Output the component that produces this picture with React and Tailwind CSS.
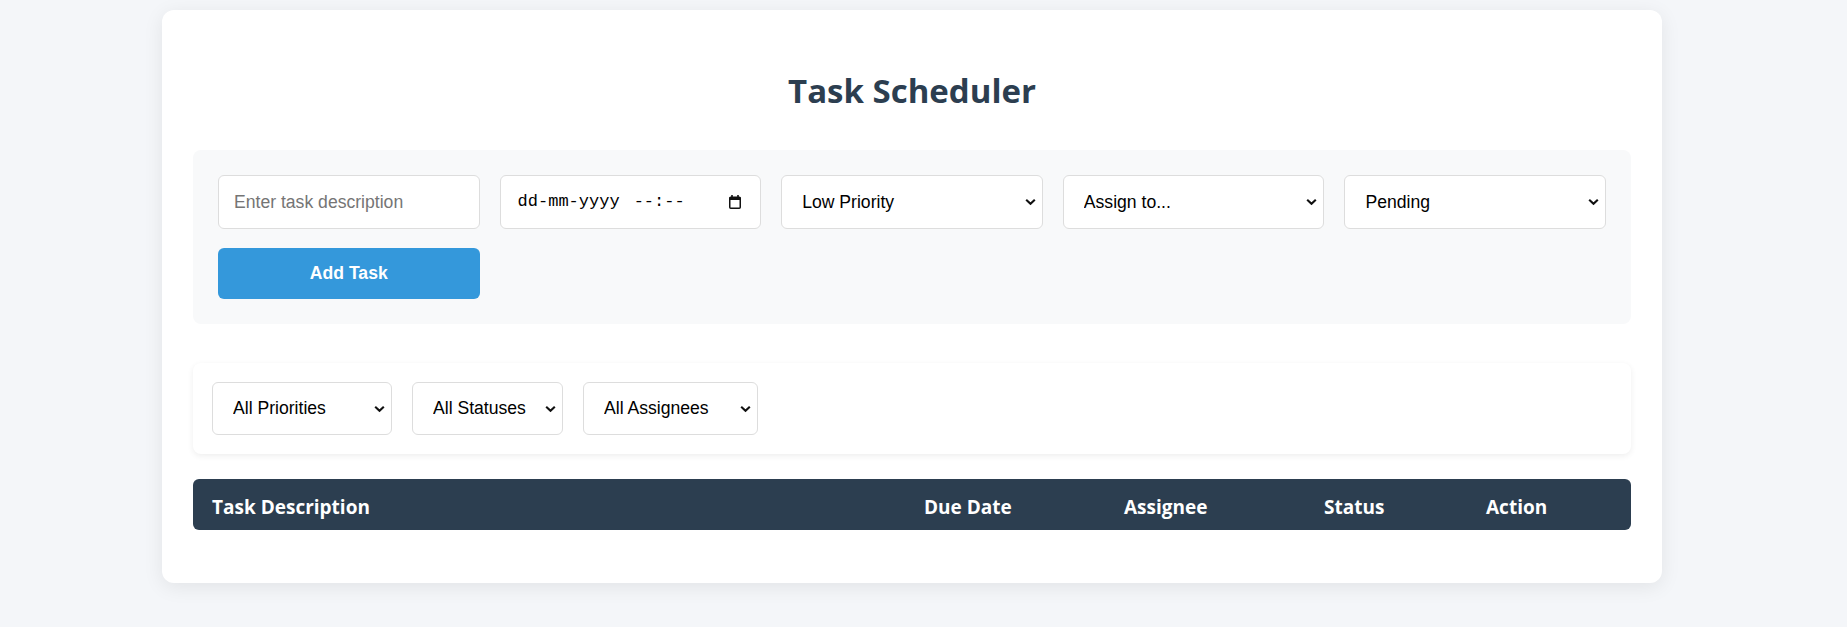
import { useState } from 'react';

const fieldFont = "font-['Liberation_Sans',Arial,sans-serif] text-[17.6px]";

function Chevron() {
  return (
    <svg
      className="pointer-events-none absolute top-1/2 right-[7px] -translate-y-1/2"
      width="11"
      height="7"
      viewBox="0 0 11 7"
      fill="none"
    >
      <path d="M1.2 1.2L5.5 5.3L9.8 1.2" stroke="#111" strokeWidth="2.1" />
    </svg>
  );
}

function Select({ value, onChange, options, className }) {
  return (
    <div className={`relative ${className}`}>
      <select
        value={value}
        onChange={(event) => onChange(event.target.value)}
        className={`h-full w-full appearance-none rounded-md border border-[#dddddd] bg-white pl-[20px] pr-[28px] text-black outline-none ${fieldFont}`}
      >
        {options.map((item) => (
          <option key={item} value={item}>
            {item}
          </option>
        ))}
      </select>
      <Chevron />
    </div>
  );
}

function CalendarIcon() {
  return (
    <svg width="12" height="14" viewBox="0 0 12 14" fill="none">
      <rect x="2.2" y="0" width="1.6" height="2.5" fill="#111" />
      <rect x="8.2" y="0" width="1.6" height="2.5" fill="#111" />
      <rect x="0.75" y="2.25" width="10.5" height="11" rx="1" stroke="#111" strokeWidth="1.5" />
      <rect x="0.5" y="2" width="11" height="3" fill="#111" />
    </svg>
  );
}

export default function App() {
  const [description, setDescription] = useState('');
  const [priority, setPriority] = useState('Low Priority');
  const [assignee, setAssignee] = useState('Assign to...');
  const [status, setStatus] = useState('Pending');
  const [filterPriority, setFilterPriority] = useState('All Priorities');
  const [filterStatus, setFilterStatus] = useState('All Statuses');
  const [filterAssignee, setFilterAssignee] = useState('All Assignees');

  return (
    <div className="min-h-screen bg-[#f4f6f9] pt-[10px] font-['Open_Sans',sans-serif]">
      <div className="w-[1824px]">
        <div className="mx-auto w-[1500px] rounded-xl bg-white px-[31px] pt-[59px] pb-[53px] shadow-[0_4px_20px_rgba(0,0,0,0.08)]">
          <h1 className="mb-[37px] h-[44px] text-center text-[33px] leading-[44px] font-bold text-[#2c3e50]">
            Task Scheduler
          </h1>

          <div className="rounded-lg bg-[#f8f9fa] p-[25px]">
            <div className="grid grid-cols-5 gap-x-[20px] gap-y-[19px]">
              <input
                type="text"
                value={description}
                onChange={(event) => setDescription(event.target.value)}
                placeholder="Enter task description"
                className={`h-[54px] rounded-md border border-[#dddddd] bg-white px-[15px] text-black outline-none placeholder:text-[#757575] ${fieldFont}`}
              />
              <div className="flex h-[54px] items-center rounded-md border border-[#dddddd] bg-white pr-[19px] pl-[17px]">
                <span className="font-['Liberation_Mono',monospace] text-[17px] text-black">dd-mm-yyyy</span>
                <span className="ml-[14px] font-['Liberation_Mono',monospace] text-[17px] text-black">--:--</span>
                <span className="ml-auto flex">
                  <CalendarIcon />
                </span>
              </div>
              <Select
                value={priority}
                onChange={setPriority}
                options={['Low Priority', 'Medium Priority', 'High Priority']}
                className="h-[54px]"
              />
              <Select
                value={assignee}
                onChange={setAssignee}
                options={['Assign to...', 'Alice', 'Bob', 'Charlie']}
                className="h-[54px]"
              />
              <Select
                value={status}
                onChange={setStatus}
                options={['Pending', 'In Progress', 'Completed']}
                className="h-[54px]"
              />
              <button
                type="button"
                className={`h-[51px] rounded-md bg-[#3498db] font-bold text-white ${fieldFont}`}
              >
                Add Task
              </button>
            </div>
          </div>

          <div className="mt-[39px] flex gap-[20px] rounded-lg bg-white p-[19px] shadow-[0_2px_6px_rgba(0,0,0,0.07)]">
            <Select
              value={filterPriority}
              onChange={setFilterPriority}
              options={['All Priorities', 'Low', 'Medium', 'High']}
              className="h-[53px] w-[180px]"
            />
            <Select
              value={filterStatus}
              onChange={setFilterStatus}
              options={['All Statuses', 'Pending', 'Completed']}
              className="h-[53px] w-[151px]"
            />
            <Select
              value={filterAssignee}
              onChange={setFilterAssignee}
              options={['All Assignees', 'Alice', 'Bob']}
              className="h-[53px] w-[175px]"
            />
          </div>

          <div className="mt-[25px] grid h-[51px] grid-cols-[712px_200px_200px_162px_1fr] items-center rounded-md bg-[#2c3e50] pt-[5px] text-[19px] font-bold text-white">
            <div className="pl-[19px]">Task Description</div>
            <div className="pl-[19px]">Due Date</div>
            <div className="pl-[19px]">Assignee</div>
            <div className="pl-[19px]">Status</div>
            <div className="pl-[19px]">Action</div>
          </div>
        </div>
      </div>
    </div>
  );
}
